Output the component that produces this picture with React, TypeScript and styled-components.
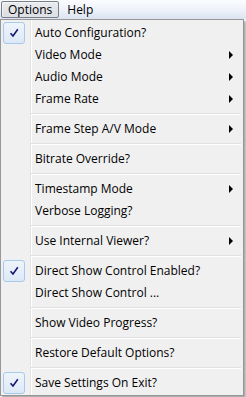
import React, { FC } from "react";
import styled, { createGlobalStyle, css } from "styled-components";

type Entry =
    | { kind: "item"; label: string; checked?: boolean; submenu?: boolean }
    | { kind: "sep" };

const entries: Entry[] = [
    { kind: "item", label: "Auto Configuration?", checked: true },
    { kind: "item", label: "Video Mode", submenu: true },
    { kind: "item", label: "Audio Mode", submenu: true },
    { kind: "item", label: "Frame Rate", submenu: true },
    { kind: "sep" },
    { kind: "item", label: "Frame Step A/V Mode", submenu: true },
    { kind: "sep" },
    { kind: "item", label: "Bitrate Override?" },
    { kind: "sep" },
    { kind: "item", label: "Timestamp Mode", submenu: true },
    { kind: "item", label: "Verbose Logging?" },
    { kind: "sep" },
    { kind: "item", label: "Use Internal Viewer?", submenu: true },
    { kind: "sep" },
    { kind: "item", label: "Direct Show Control Enabled?", checked: true },
    { kind: "item", label: "Direct Show Control ..." },
    { kind: "sep" },
    { kind: "item", label: "Show Video Progress?" },
    { kind: "sep" },
    { kind: "item", label: "Restore Default Options?" },
    { kind: "sep" },
    { kind: "item", label: "Save Settings On Exit?", checked: true },
];

const CheckMark: FC = () => (
    <svg width="10" height="10" viewBox="0 0 10 10">
        <path d="M1.5 5.2 L4 8 L8.8 1.2" fill="none" stroke="#14196b" strokeWidth="1.6" />
    </svg>
);

const App: FC = () => {
    return (
        <>
            <GlobalStyle />
            <Window>
                <MenuBar>
                    <MenuTitle $active>Options</MenuTitle>
                    <MenuTitle>Help</MenuTitle>
                </MenuBar>
                <Popup>
                    {entries.map((e, i) =>
                        e.kind === "sep" ? (
                            <Separator key={i} />
                        ) : (
                            <Item key={i}>
                                <CheckCell>{e.checked && <CheckBox><CheckMark /></CheckBox>}</CheckCell>
                                <Label>{e.label}</Label>
                                {e.submenu && <Arrow />}
                            </Item>
                        )
                    )}
                </Popup>
            </Window>
        </>
    );
};

export default App;

const GlobalStyle = createGlobalStyle`
    body {
        margin: 0;
        background: #ffffff;
        font-family: "Open Sans", "Noto Sans", sans-serif;
        font-size: 12px;
        color: #000;
    }
`;

const Window = styled.div`
    width: 246px;
    height: 397px;
    display: flex;
    flex-direction: column;
    overflow: hidden;
`;

const MenuBar = styled.div`
    height: 19px;
    display: flex;
    align-items: stretch;
    padding: 1px 0 0 1px;
    box-sizing: border-box;
    gap: 1px;
    background: linear-gradient(#fbfcfe, #edf1f8 55%, #dbe3f1);
`;

const MenuTitle = styled.div<{ $active?: boolean }>`
    display: flex;
    align-items: center;
    padding: 0 6px;
    height: 17px;
    box-sizing: border-box;
    border: 1px solid transparent;
    border-radius: 2px;
    line-height: 1;
    ${(p) => p.$active && css`
        border-color: #7a7f87;
        background: linear-gradient(#e9ebee, #dcdfe4);
        box-shadow: inset 1px 1px 0 rgba(255, 255, 255, 0.5);
    `}
`;

const Popup = styled.div`
    width: 244px;
    box-sizing: border-box;
    border: 1px solid #979797;
    padding: 2px 2px 1px 2px;
    background-color: #f0f0f0;
    background-image: linear-gradient(
        to right,
        transparent 29px,
        #e2e3e3 29px,
        #e2e3e3 30px,
        #ffffff 30px,
        #ffffff 31px,
        transparent 31px
    );
    box-shadow: 2px 2px 2px rgba(0, 0, 0, 0.35);
`;

const Item = styled.div`
    height: 22px;
    display: flex;
    align-items: center;
`;

const CheckCell = styled.div`
    width: 32px;
    height: 22px;
    flex: none;
    display: flex;
    align-items: center;
`;

const CheckBox = styled.div`
    width: 22px;
    height: 22px;
    box-sizing: border-box;
    border: 1px solid #a9c8ee;
    border-radius: 3px;
    background: linear-gradient(#eef4fc, #dde8f7);
    display: flex;
    align-items: center;
    justify-content: center;
`;

const Label = styled.span`
    flex: 1;
    white-space: nowrap;
    line-height: 22px;
`;

const Arrow = styled.span`
    width: 0;
    height: 0;
    margin-right: 8px;
    border-top: 4px solid transparent;
    border-bottom: 4px solid transparent;
    border-left: 4px solid #000;
`;

const Separator = styled.div`
    height: 8px;
    margin-left: 28px;
    display: flex;
    flex-direction: column;
    justify-content: center;

    &::before {
        content: "";
        height: 1px;
        background: #e0e0e0;
        border-bottom: 1px solid #ffffff;
    }
`;
